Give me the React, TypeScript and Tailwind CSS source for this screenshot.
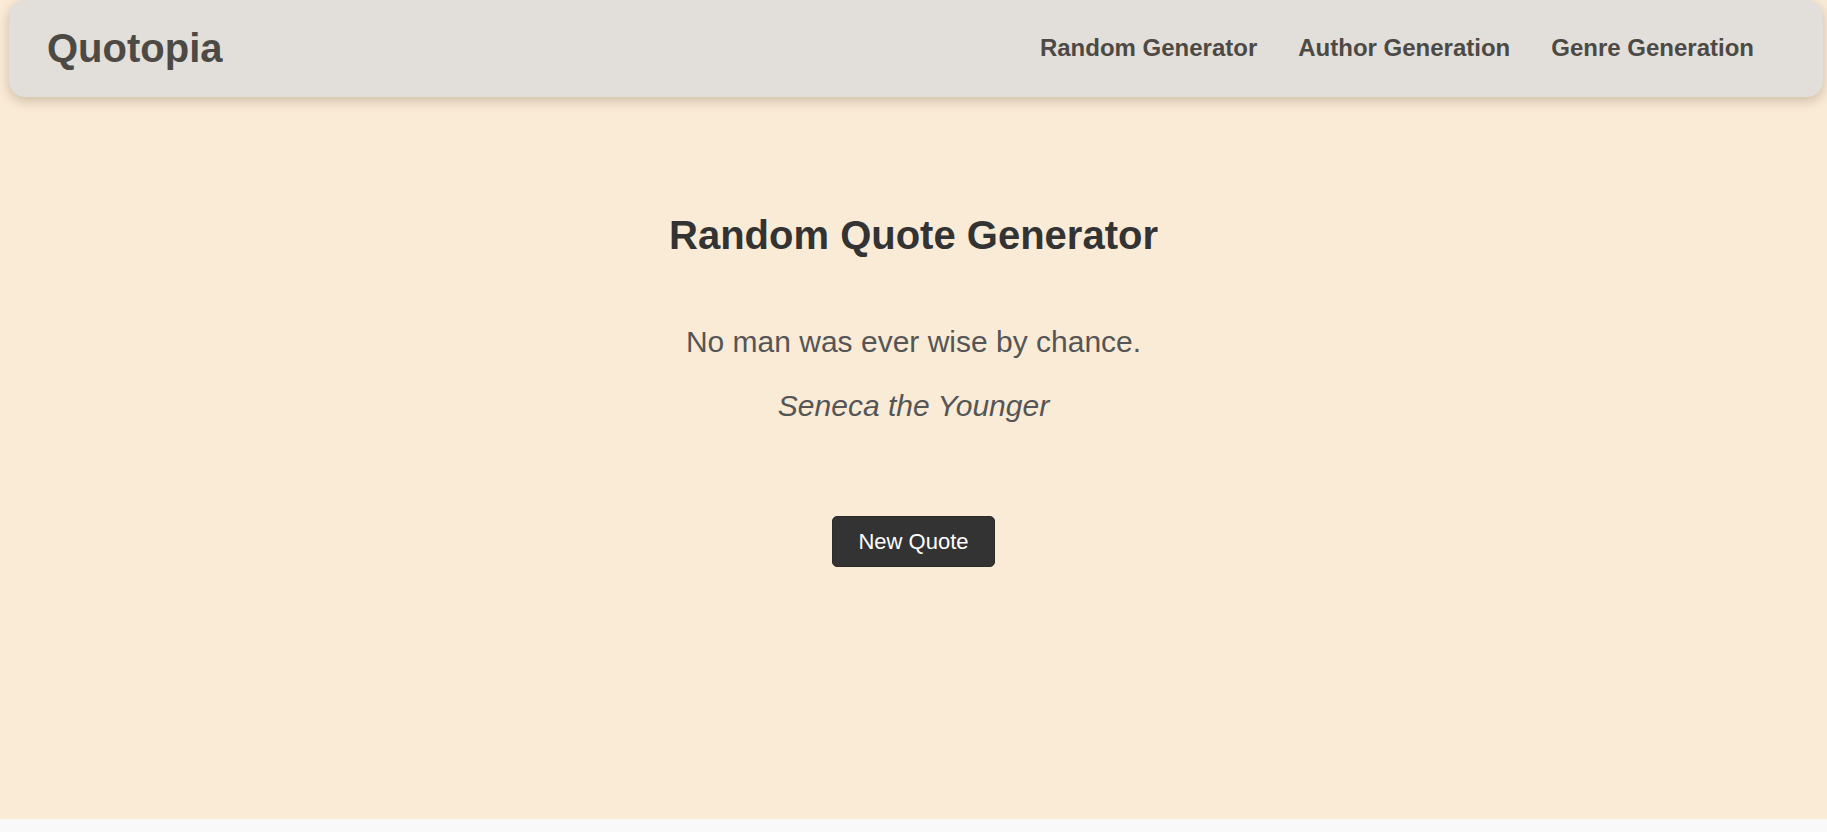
const links = ["Random Generator", "Author Generation", "Genre Generation"];

const Navbar = () => {
  return (
    <nav className="ml-[9px] mr-[4px] h-[97px] rounded-[16px] bg-[#e2dfda] pl-[38px] pr-[69px] pb-[2px] flex items-center justify-between shadow-[0_4px_12px_rgba(80,50,20,0.25)]">
      <h2 className="text-[40px] leading-[46px] font-bold text-[#4d4944]">Quotopia</h2>
      <ul className="flex items-center gap-[41px]">
        {links.map((link) => (
          <li key={link} className="text-[24px] leading-[28px] font-bold text-[#4d4944] cursor-pointer">
            {link}
          </li>
        ))}
      </ul>
    </nav>
  );
};

const QuoteBox = () => {
  return (
    <main className="flex flex-col items-center text-center">
      <h1 className="mt-[115px] text-[40px] leading-[46px] font-bold text-[#333333]">
        Random Quote Generator
      </h1>
      <p className="mt-[66px] text-[30px] leading-[35px] text-[#555555]">
        No man was ever wise by chance.
      </p>
      <p className="mt-[29px] text-[30px] leading-[35px] italic text-[#555555]">
        Seneca the Younger
      </p>
      <button className="mt-[93px] px-[25px] py-[12px] text-[22px] leading-[25px] text-white bg-[#333333] rounded-[5px] border border-[#2a2a2a]">
        New Quote
      </button>
    </main>
  );
};

export default function App() {
  return (
    <div className="min-h-[832px] bg-[#f9f9f9] font-['Liberation_Sans',Arial,sans-serif]">
      <div className="h-[819px] bg-[#faebd7]">
        <Navbar />
        <QuoteBox />
      </div>
    </div>
  );
}
